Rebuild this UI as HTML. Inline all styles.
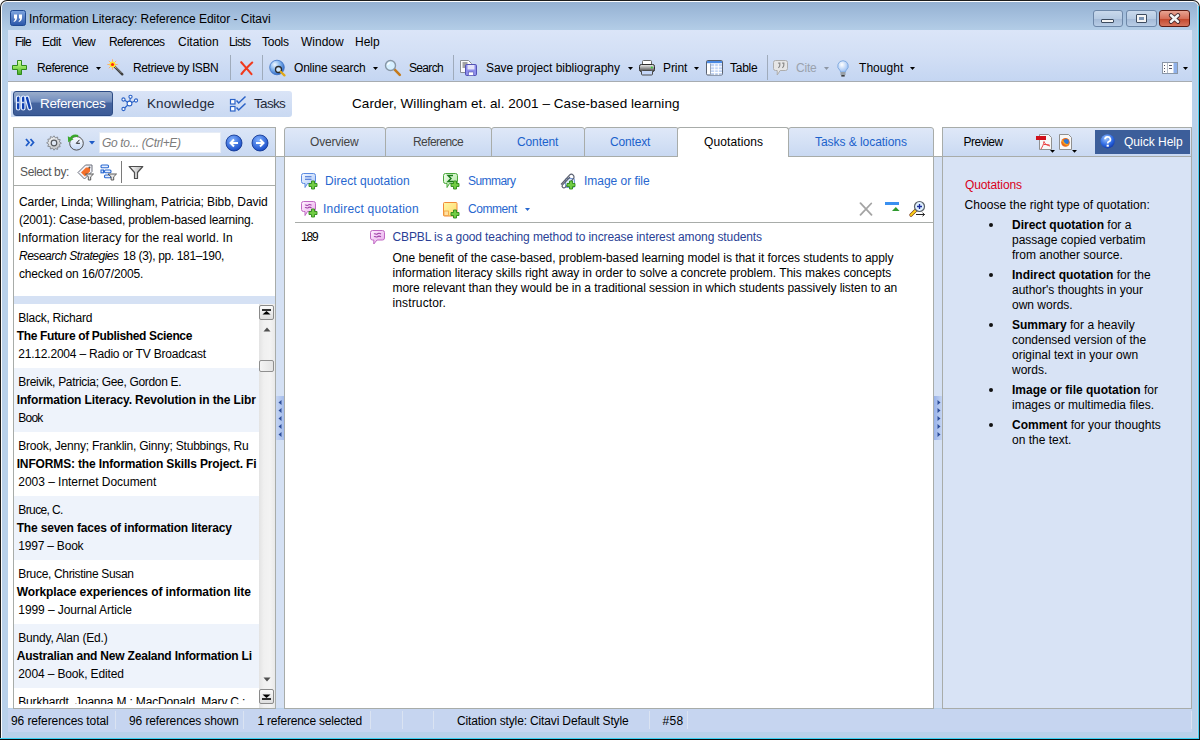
<!DOCTYPE html>
<html><head><meta charset="utf-8"><style>
html,body{margin:0;padding:0;width:1200px;height:740px;overflow:hidden;background:#fff}
body>div,body>svg{position:absolute}
.t{position:absolute;white-space:pre;line-height:1;font-family:"Liberation Sans", sans-serif}
</style></head><body>
<div style="left:0px;top:0px;width:1200px;height:740px;background:#1c1c1c;border-radius:7px 7px 0 0"></div>
<div style="left:1px;top:1px;width:1198px;height:738px;background:#fdfdfd;border-radius:6px 6px 0 0"></div>
<div style="left:2px;top:2px;width:1196px;height:736px;background:linear-gradient(#95b1d2 0px,#a5c0de 15px,#b4cee7 29px,#b9d1ea 60px,#b9d1ea 100%);border-radius:5px 5px 0 0"></div>
<div style="left:1198px;top:6px;width:1px;height:733px;background:#48d0f4"></div>
<div style="left:1197px;top:6px;width:1px;height:732px;background:#c9d6e6"></div>
<div style="left:0px;top:738px;width:1199px;height:1px;background:#38d0f2"></div>
<div style="left:0px;top:739px;width:1200px;height:1px;background:#0a0a0a"></div>
<div style="left:8px;top:30px;width:1184px;height:678px;background:#fff"></div>
<svg style="left:10px;top:10px" width="16" height="16" viewBox="0 0 16 16"><defs><linearGradient id="ig" x1="0" y1="0" x2="0" y2="1"><stop offset="0" stop-color="#7fa6e0"/><stop offset="1" stop-color="#2a55a8"/></linearGradient></defs><rect x="0.5" y="0.5" width="15" height="15" rx="2" fill="url(#ig)" stroke="#1f4a93"/><path d="M4 4.5h3v3c0 2-1 3.5-3 4.5l-.5-.8c1-.6 1.6-1.4 1.7-2.7H4z M9 4.5h3v3c0 2-1 3.5-3 4.5l-.5-.8c1-.6 1.6-1.4 1.7-2.7H9z" fill="#fff"/></svg>
<div class="t" style="left:29.0px;top:12.8px;font-size:12px;color:#000;font-weight:normal;font-style:normal;letter-spacing:-0.024px;">Information Literacy: Reference Editor - Citavi</div>
<div style="left:1093px;top:10px;width:30px;height:17px;box-sizing:border-box;border:1px solid #6d87a8;border-radius:3px;background:linear-gradient(#c9d9ec,#b7cbe3 50%,#a3b9d6 51%,#b8cde6)"></div>
<div style="left:1101px;top:19px;width:13px;height:4px;box-sizing:border-box;background:#f4f4f4;border:1px solid #3c4b5f;border-radius:1px"></div>
<div style="left:1126px;top:10px;width:31px;height:17px;box-sizing:border-box;border:1px solid #6d87a8;border-radius:3px;background:linear-gradient(#c9d9ec,#b7cbe3 50%,#a3b9d6 51%,#b8cde6)"></div>
<div style="left:1136px;top:14px;width:11px;height:9px;box-sizing:border-box;background:#f4f4f4;border:1px solid #3c4b5f;border-radius:1px"></div>
<div style="left:1139px;top:17px;width:5px;height:3px;box-sizing:border-box;background:#7b95b5"></div>
<div style="left:1159px;top:10px;width:31px;height:17px;box-sizing:border-box;border:1px solid #5b1a12;border-radius:3px;background:linear-gradient(#e8a493,#d7705a 50%,#c2452a 51%,#d6745c)"></div>
<svg style="left:1167px;top:12px" width="15" height="13" viewBox="0 0 15 13"><path d="M4 3.3L11 9.7M11 3.3L4 9.7" stroke="#40262a" stroke-width="4.4" stroke-linecap="round"/><path d="M4 3.3L11 9.7M11 3.3L4 9.7" stroke="#f4f4f4" stroke-width="2.6" stroke-linecap="round"/></svg>
<div style="left:8px;top:30px;width:1184px;height:51px;background:linear-gradient(#dbe5f8,#d2dff5 25px,#c5d6f2 50px)"></div>
<div style="left:8px;top:81px;width:1184px;height:1px;background:#a7acb1"></div>
<div class="t" style="left:15.0px;top:35.8px;font-size:12px;color:#000;font-weight:normal;font-style:normal;letter-spacing:-0.887px;">File</div>
<div class="t" style="left:42.0px;top:35.8px;font-size:12px;color:#000;font-weight:normal;font-style:normal;letter-spacing:-0.448px;">Edit</div>
<div class="t" style="left:72.0px;top:35.8px;font-size:12px;color:#000;font-weight:normal;font-style:normal;letter-spacing:-0.709px;">View</div>
<div class="t" style="left:109.0px;top:35.8px;font-size:12px;color:#000;font-weight:normal;font-style:normal;letter-spacing:-0.596px;">References</div>
<div class="t" style="left:178.0px;top:35.8px;font-size:12px;color:#000;font-weight:normal;font-style:normal;letter-spacing:-0.002px;">Citation</div>
<div class="t" style="left:229.0px;top:35.8px;font-size:12px;color:#000;font-weight:normal;font-style:normal;letter-spacing:-0.668px;">Lists</div>
<div class="t" style="left:262.0px;top:35.8px;font-size:12px;color:#000;font-weight:normal;font-style:normal;letter-spacing:-0.253px;">Tools</div>
<div class="t" style="left:301.0px;top:35.8px;font-size:12px;color:#000;font-weight:normal;font-style:normal;letter-spacing:-0.003px;">Window</div>
<div class="t" style="left:355.0px;top:35.8px;font-size:12px;color:#000;font-weight:normal;font-style:normal;letter-spacing:-0.002px;">Help</div>
<div class="t" style="left:37.0px;top:61.8px;font-size:12px;color:#000;font-weight:normal;font-style:normal;letter-spacing:-0.461px;">Reference</div>
<div class="t" style="left:133.0px;top:61.8px;font-size:12px;color:#000;font-weight:normal;font-style:normal;letter-spacing:-0.424px;">Retrieve by ISBN</div>
<div class="t" style="left:294.0px;top:61.8px;font-size:12px;color:#000;font-weight:normal;font-style:normal;letter-spacing:-0.197px;">Online search</div>
<div class="t" style="left:409.0px;top:61.8px;font-size:12px;color:#000;font-weight:normal;font-style:normal;letter-spacing:-0.670px;">Search</div>
<div class="t" style="left:486.0px;top:61.8px;font-size:12px;color:#000;font-weight:normal;font-style:normal;letter-spacing:-0.031px;">Save project bibliography</div>
<div class="t" style="left:663.0px;top:61.8px;font-size:12px;color:#000;font-weight:normal;font-style:normal;letter-spacing:-0.085px;">Print</div>
<div class="t" style="left:730.0px;top:61.8px;font-size:12px;color:#000;font-weight:normal;font-style:normal;letter-spacing:-0.253px;">Table</div>
<div class="t" style="left:796.0px;top:61.8px;font-size:12px;color:#9aa2ad;font-weight:normal;font-style:normal;letter-spacing:-0.222px;">Cite</div>
<div class="t" style="left:859.0px;top:61.8px;font-size:12px;color:#000;font-weight:normal;font-style:normal;letter-spacing:0.050px;">Thought</div>
<svg style="left:96px;top:67px" width="5" height="3" viewBox="0 0 5 3"><path d="M0 0h5L2.5 3z" fill="#000"/></svg>
<svg style="left:373px;top:67px" width="5" height="3" viewBox="0 0 5 3"><path d="M0 0h5L2.5 3z" fill="#000"/></svg>
<svg style="left:628px;top:67px" width="5" height="3" viewBox="0 0 5 3"><path d="M0 0h5L2.5 3z" fill="#000"/></svg>
<svg style="left:694px;top:67px" width="5" height="3" viewBox="0 0 5 3"><path d="M0 0h5L2.5 3z" fill="#000"/></svg>
<svg style="left:910px;top:67px" width="5" height="3" viewBox="0 0 5 3"><path d="M0 0h5L2.5 3z" fill="#000"/></svg>
<svg style="left:1183px;top:67px" width="5" height="3" viewBox="0 0 5 3"><path d="M0 0h5L2.5 3z" fill="#000"/></svg>
<svg style="left:824px;top:67px" width="5" height="3" viewBox="0 0 5 3"><path d="M0 0h5L2.5 3z" fill="#8d96a3"/></svg>
<div style="left:230px;top:55px;width:1px;height:25px;background:#9fabbb"></div>
<div style="left:262px;top:55px;width:1px;height:25px;background:#9fabbb"></div>
<div style="left:453px;top:55px;width:1px;height:25px;background:#9fabbb"></div>
<div style="left:767px;top:55px;width:1px;height:25px;background:#9fabbb"></div>
<svg style="left:12px;top:60px" width="16" height="16" viewBox="0 0 16 16"><defs><linearGradient id="gp" x1="0" y1="0" x2="0" y2="1"><stop offset="0" stop-color="#d9ffa8"/><stop offset="0.5" stop-color="#8ee05a"/><stop offset="1" stop-color="#45a828"/></linearGradient></defs><path d="M5.5 0.5h4v5h5v4h-5v5h-4v-5h-5v-4h5z" fill="url(#gp)" stroke="#2f8a1c" stroke-linejoin="round"/></svg>
<svg style="left:107px;top:59px" width="17" height="17" viewBox="0 0 17 17"><path d="M6.5 6.5L15.3 15.3" stroke="#3c3c3c" stroke-width="2.4" stroke-linecap="round"/><path d="M7.5 7L14.5 14" stroke="#b0b0b0" stroke-width="0.7"/><path d="M5.5 0.3v10.4M0.3 5.5h10.4M1.8 1.8l7.4 7.4M9.2 1.8l-7.4 7.4" stroke="#ffa868" stroke-width="0.9"/><circle cx="5.5" cy="5.5" r="3" fill="#ffe82a"/><circle cx="5.5" cy="5.5" r="1.6" fill="#ff2a10"/></svg>
<svg style="left:239px;top:60px" width="16" height="16" viewBox="0 0 16 16"><path d="M2.2 2.2C5.5 6 9.5 10.5 12.5 14.2M13.2 2.5C10 5.5 5.5 10 2.5 14" stroke="#f03a1e" stroke-width="2.1" stroke-linecap="round" fill="none"/></svg>
<svg style="left:269px;top:59px" width="17" height="18" viewBox="0 0 17 18"><defs><radialGradient id="gg" cx="0.35" cy="0.3" r="0.75"><stop offset="0" stop-color="#f0f8ff"/><stop offset="0.45" stop-color="#86b8f0"/><stop offset="1" stop-color="#2a62c0"/></radialGradient></defs><circle cx="8" cy="8.5" r="7.3" fill="url(#gg)" stroke="#3a70c4" stroke-width="0.8"/><circle cx="9.5" cy="10.5" r="3" fill="#cfe8ff" stroke="#2a2a2a" stroke-width="1.3"/><path d="M11.8 12.8l3.6 3.6" stroke="#e0a818" stroke-width="2.3" stroke-linecap="round"/></svg>
<svg style="left:384px;top:59px" width="18" height="18" viewBox="0 0 18 18"><path d="M10.2 10.2L15.8 15.8" stroke="#c47a1c" stroke-width="2.6" stroke-linecap="round"/><circle cx="6.5" cy="6.5" r="5" fill="#d6f0ff" stroke="#8797a6" stroke-width="1.4"/><path d="M3.6 6.2a3 3 0 0 1 2.6-2.6" stroke="#fff" stroke-width="1.3" fill="none"/></svg>
<svg style="left:460px;top:60px" width="17" height="16" viewBox="0 0 17 16"><path d="M0.5 0.5h8l3 3v9h-11z" fill="#fbfbfb" stroke="#8a8f96"/><path d="M2.5 3h5M2.5 5h5M2.5 7h3" stroke="#4a4a4a"/><rect x="5.5" y="4.5" width="11" height="11" rx="1.2" fill="#8e8eea" stroke="#5252b4"/><rect x="7.5" y="5" width="7" height="4.5" fill="#e4e4fa"/><rect x="8.5" y="12" width="5" height="3.5" fill="#fff" stroke="#5252b4" stroke-width="0.6"/></svg>
<svg style="left:639px;top:60px" width="16" height="16" viewBox="0 0 16 16"><defs><linearGradient id="pg" x1="0" y1="0" x2="0" y2="1"><stop offset="0" stop-color="#f0f0f0"/><stop offset="0.6" stop-color="#8a8a8a"/><stop offset="1" stop-color="#444"/></linearGradient></defs><rect x="3.5" y="0.5" width="9" height="4.5" rx="1" fill="#fff" stroke="#666"/><rect x="0.5" y="4.5" width="15" height="7" rx="1.8" fill="url(#pg)" stroke="#2e2e2e"/><circle cx="12.8" cy="7.6" r="1" fill="#36d036"/><rect x="2.5" y="10.5" width="11" height="4.5" rx="1" fill="#c4d6f8" stroke="#4a4a4a"/></svg>
<svg style="left:706px;top:60px" width="17" height="16" viewBox="0 0 17 16"><rect x="0.5" y="0.5" width="16" height="14.5" rx="1.2" fill="#fff" stroke="#58606e"/><rect x="1" y="1" width="15" height="2.2" fill="#4a8ae4"/><rect x="5" y="4" width="11" height="10.5" fill="#c2d5f5"/><path d="M5 6.8h11M5 9.8h11M5 12.5h11M8.7 4v11M12.3 4v11" stroke="#fff" stroke-width="1"/><path d="M4.5 3.5v11" stroke="#9aa4b4"/></svg>
<svg style="left:773px;top:60px" width="16" height="16" viewBox="0 0 16 16"><path d="M2.5 0.5h10a2 2 0 0 1 2 2v6a2 2 0 0 1-2 2H7.2L4.2 15v-4.5H2.5a2 2 0 0 1-2-2v-6a2 2 0 0 1 2-2z" fill="#e6e6e6" stroke="#adadad"/><path d="M5.2 3.2h1.6v2c0 1.2-.6 2.1-1.6 2.6M9.2 3.2h1.6v2c0 1.2-.6 2.1-1.6 2.6" stroke="#8a8a8a" stroke-width="1.2" fill="none"/></svg>
<svg style="left:837px;top:60px" width="12" height="17" viewBox="0 0 12 17"><defs><radialGradient id="blb" cx="0.4" cy="0.35" r="0.7"><stop offset="0" stop-color="#ffffff"/><stop offset="1" stop-color="#92baf2"/></radialGradient></defs><path d="M6 0.7a5.3 5.3 0 0 0-3.3 9.4c.7.6.8 1.3.8 2h5c0-.7.1-1.4.8-2A5.3 5.3 0 0 0 6 0.7z" fill="url(#blb)" stroke="#7aa6de" stroke-width="0.9"/><rect x="3.5" y="12" width="5" height="3" fill="#98a0a8"/><rect x="4.3" y="15" width="3.4" height="1.6" fill="#3e3e3e"/></svg>
<svg style="left:1162px;top:62px" width="16" height="12" viewBox="0 0 16 12"><rect x="0.5" y="0.5" width="15" height="11" fill="#fdfdfd" stroke="#8a96a6"/><rect x="11.5" y="1" width="3.5" height="10" fill="#8fb1ea"/><path d="M5.5 1v10" stroke="#b4bcc8"/><path d="M2.5 3v1M2.5 6v1M2.5 9v1" stroke="#556"/><path d="M7 3.5h3M7 6.5h3" stroke="#556"/></svg>
<div style="left:11px;top:91px;width:281px;height:26px;background:linear-gradient(#dae4f7,#c9d9f2);border-radius:0 3px 3px 0"></div>
<div style="left:13px;top:91px;width:100px;height:25px;box-sizing:border-box;border:1px solid #2d4c85;border-radius:3px;background:linear-gradient(#9aadcb,#7590c0 40%,#45649f 50%,#3c5b97)"></div>
<svg style="left:15px;top:95px" width="18" height="16" viewBox="0 0 18 16"><g stroke="#e4eeff" stroke-width="1.2" fill="#0d3eb2"><rect x="1.4" y="1" width="3.6" height="14" rx="1.8"/><rect x="6.4" y="1" width="3.6" height="14" rx="1.8"/><rect x="11.6" y="1" width="3.6" height="14" rx="1.8" transform="rotate(-15 13.4 8)"/></g><path d="M2 7.5h2.5M7 7.5h2.5" stroke="#c4d2ee" stroke-width="1.6"/></svg>
<div class="t" style="left:40.0px;top:96.6px;font-size:13.5px;color:#fff;font-weight:normal;font-style:normal;letter-spacing:-0.365px;">References</div>
<svg style="left:121px;top:94px" width="18" height="18" viewBox="0 0 18 18"><g stroke="#2a62c7" stroke-width="1.1" fill="#fff"><path d="M8.5 9.5L2.5 15M8.5 9.5L9.5 2.5M8.5 9.5L15 6.5M8.5 9.5L2.5 5.5" fill="none"/><circle cx="2.5" cy="15" r="1.6"/><circle cx="9.5" cy="2.8" r="1.6"/><circle cx="15" cy="6.5" r="1.6"/><circle cx="2.5" cy="5.5" r="1.6"/><circle cx="8.5" cy="9.5" r="2.4"/></g></svg>
<div class="t" style="left:147.0px;top:96.6px;font-size:13.5px;color:#1f2a3a;font-weight:normal;font-style:normal;letter-spacing:0.088px;">Knowledge</div>
<svg style="left:229px;top:95px" width="18" height="17" viewBox="0 0 18 17"><g stroke="#2a62c7" stroke-width="1.2" fill="#fff"><rect x="1.5" y="4.5" width="4.5" height="4.5"/><rect x="1.5" y="11.5" width="4.5" height="4.5"/></g><path d="M7.5 5.5l2.2 2.5L16.5 1.5M7.5 12.5l2.2 2.5L16.5 8.5" stroke="#2a62c7" stroke-width="1.5" fill="none"/></svg>
<div class="t" style="left:254.0px;top:96.6px;font-size:13.5px;color:#1f2a3a;font-weight:normal;font-style:normal;letter-spacing:-0.690px;">Tasks</div>
<div class="t" style="left:352.0px;top:96.6px;font-size:13.5px;color:#000;font-weight:normal;font-style:normal;letter-spacing:0.064px;">Carder, Willingham et. al. 2001 – Case-based learning</div>
<div style="left:13px;top:127px;width:263px;height:582px;box-sizing:border-box;border:1px solid #a8aca9;background:#fff"></div>
<div style="left:14px;top:128px;width:261px;height:28px;background:linear-gradient(#dce6f7,#c9d9f2)"></div>
<div style="left:14px;top:156px;width:261px;height:1px;background:#a8aca9"></div>
<div style="left:14px;top:185px;width:261px;height:1px;background:#a8aca9"></div>
<div style="left:14px;top:296px;width:261px;height:8px;background:#d5e1f4"></div>
<svg style="left:25px;top:138px" width="10" height="9" viewBox="0 0 10 9"><path d="M1 1l3 3.5-3 3.5M5.5 1l3 3.5-3 3.5" stroke="#1f5bc7" stroke-width="1.8" fill="none"/></svg>
<svg style="left:46px;top:135px" width="16" height="16" viewBox="0 0 16 16"><defs><radialGradient id="gear" cx="0.4" cy="0.35" r="0.7"><stop offset="0" stop-color="#fafafa"/><stop offset="1" stop-color="#b8bcc0"/></radialGradient></defs><path d="M8 0.8l1.3 2 2.3-.8.2 2.4 2.4.2-.8 2.3 2 1.3-2 1.3.8 2.3-2.4.2-.2 2.4-2.3-.8L8 15.2l-1.3-2-2.3.8-.2-2.4-2.4-.2.8-2.3-2-1.3 2-1.3-.8-2.3 2.4-.2.2-2.4 2.3.8z" fill="url(#gear)" stroke="#7a7e84" stroke-width="0.8"/><circle cx="8" cy="8" r="2.8" fill="#dfe8f5" stroke="#55595e" stroke-width="1.2"/></svg>
<svg style="left:67px;top:134px" width="18" height="17" viewBox="0 0 18 17"><defs><linearGradient id="clk" x1="0" y1="0" x2="0" y2="1"><stop offset="0" stop-color="#ffffff"/><stop offset="1" stop-color="#c4d8f6"/></linearGradient></defs><circle cx="9.5" cy="9.3" r="6.8" fill="url(#clk)" stroke="#505050" stroke-width="1"/><path d="M12.5 5.8L9.3 9.3h3.6" stroke="#222" stroke-width="1" fill="none"/><path d="M11 2.2C8 1 5 2 3.8 4.5" stroke="#3aa82a" stroke-width="2.4" fill="none"/><path d="M0.8 2.3L1.2 8.2 6.6 5.2z" fill="#3aa82a"/></svg>
<svg style="left:89px;top:141px" width="6" height="4" viewBox="0 0 6 4"><path d="M0 0h6L3 3.5z" fill="#1f5bc7"/></svg>
<div style="left:99px;top:132px;width:122px;height:21px;box-sizing:border-box;border:1px solid #e6ecf5;background:#fff"></div>
<div class="t" style="left:102.0px;top:136.8px;font-size:12px;color:#7c7c7c;font-weight:normal;font-style:italic;letter-spacing:-0.335px;">Go to... (Ctrl+E)</div>
<svg style="left:225px;top:134px" width="18" height="18" viewBox="0 0 18 18"><defs><radialGradient id="bg1" cx="0.4" cy="0.3" r="0.8"><stop offset="0" stop-color="#7fb0ff"/><stop offset="1" stop-color="#0b3fc0"/></radialGradient></defs><circle cx="9" cy="9" r="8" fill="url(#bg1)" stroke="#0a2f8a" stroke-width="0.8"/><path d="M13 9H6M9 5.5L5.5 9 9 12.5" stroke="#fff" stroke-width="2" fill="none"/></svg>
<svg style="left:251px;top:134px" width="18" height="18" viewBox="0 0 18 18"><circle cx="9" cy="9" r="8" fill="url(#bg1)" stroke="#0a2f8a" stroke-width="0.8"/><path d="M5 9h7M9 5.5L12.5 9 9 12.5" stroke="#fff" stroke-width="2" fill="none"/></svg>
<div class="t" style="left:20.0px;top:165.8px;font-size:12px;color:#555;font-weight:normal;font-style:normal;letter-spacing:-0.373px;">Select by:</div>
<svg style="left:77px;top:163px" width="18" height="18" viewBox="0 0 18 18"><path d="M1 9.5L8.5 2h6.5v6.5L7.5 16z" fill="#f4f4fa" stroke="#6a6e7a"/><path d="M4 9.5L9 4.5h4v4L8 13.5z" fill="#f4702a"/><circle cx="12.5" cy="4.5" r="1" fill="#555"/><path d="M8.5 11h8l-2.8 2.8v3.2h-2.4v-3.2z" fill="#e8e8e8" stroke="#4a4a4a" stroke-width="0.9"/></svg>
<svg style="left:100px;top:164px" width="18" height="18" viewBox="0 0 18 18"><g fill="#e8f0ff" stroke="#2b6ad1" stroke-width="1.1"><rect x="1" y="1" width="7.5" height="2.8" rx="1"/><rect x="1" y="6" width="2.5" height="2.8"/><rect x="4.5" y="6" width="6.5" height="2.8" rx="1"/><rect x="4.5" y="11" width="6.5" height="2.8" rx="1"/></g><path d="M8 10h8.5l-2.8 2.8v3.2h-2.6v-3.2z" fill="#e8e8e8" stroke="#4a4a4a" stroke-width="0.9"/></svg>
<div style="left:121px;top:161px;width:1px;height:22px;background:#7a7a7a"></div>
<svg style="left:128px;top:164px" width="16" height="16" viewBox="0 0 16 16"><defs><linearGradient id="fun" x1="0" y1="0" x2="1" y2="0"><stop offset="0" stop-color="#ffffff"/><stop offset="1" stop-color="#b0b0b0"/></linearGradient></defs><path d="M1.2 2.5h13.6L9.5 8.5v6H6.5v-6z" fill="url(#fun)" stroke="#4e4e4e" stroke-width="1.2" stroke-linejoin="round"/></svg>
<div class="t" style="left:19.0px;top:195.8px;font-size:12px;color:#000;font-weight:normal;font-style:normal;letter-spacing:-0.073px;">Carder, Linda; Willingham, Patricia; Bibb, David</div>
<div class="t" style="left:19.0px;top:213.8px;font-size:12px;color:#000;font-weight:normal;font-style:normal;letter-spacing:-0.174px;">(2001): Case-based, problem-based learning.</div>
<div class="t" style="left:18.0px;top:231.8px;font-size:12px;color:#000;font-weight:normal;font-style:normal;letter-spacing:0.093px;">Information literacy for the real world. In</div>
<div class="t" style="left:19.0px;top:249.8px;font-size:12px;color:#000;font-weight:normal;font-style:italic;letter-spacing:-0.484px;">Research Strategies</div>
<div class="t" style="left:123.0px;top:249.8px;font-size:12px;color:#000;font-weight:normal;font-style:normal;letter-spacing:-0.355px;">18 (3), pp. 181–190,</div>
<div class="t" style="left:19.0px;top:267.8px;font-size:12px;color:#000;font-weight:normal;font-style:normal;letter-spacing:-0.180px;">checked on 16/07/2005.</div>
<div style="left:14px;top:304px;width:245px;height:404px;overflow:hidden">
<div style="position:absolute;left:0;top:0px;width:245px;height:64px;background:#fff"></div>
<div style="position:absolute;left:0;top:64px;width:245px;height:64px;background:#eef3fb"></div>
<div style="position:absolute;left:0;top:128px;width:245px;height:64px;background:#fff"></div>
<div style="position:absolute;left:0;top:192px;width:245px;height:64px;background:#eef3fb"></div>
<div style="position:absolute;left:0;top:256px;width:245px;height:64px;background:#fff"></div>
<div style="position:absolute;left:0;top:320px;width:245px;height:64px;background:#eef3fb"></div>
<div style="position:absolute;left:0;top:384px;width:245px;height:64px;background:#fff"></div>
</div>
<div style="left:0;top:0;width:1200px;height:740px;clip-path:inset(304px 941px 36px 14px)">
<div class="t" style="left:18.3px;top:311.8px;font-size:12px;color:#000;font-weight:normal;font-style:normal;letter-spacing:-0.253px;">Black, Richard</div>
<div class="t" style="left:16.7px;top:329.8px;font-size:12px;color:#000;font-weight:bold;font-style:normal;letter-spacing:-0.345px;">The Future of Published Science</div>
<div class="t" style="left:18.3px;top:347.8px;font-size:12px;color:#000;font-weight:normal;font-style:normal;letter-spacing:-0.208px;">21.12.2004 – Radio or TV Broadcast</div>
<div class="t" style="left:18.3px;top:375.8px;font-size:12px;color:#000;font-weight:normal;font-style:normal;letter-spacing:-0.315px;">Breivik, Patricia; Gee, Gordon E.</div>
<div class="t" style="left:16.7px;top:393.8px;font-size:12px;color:#000;font-weight:bold;font-style:normal;letter-spacing:-0.123px;">Information Literacy. Revolution in the Libr</div>
<div class="t" style="left:18.3px;top:411.8px;font-size:12px;color:#000;font-weight:normal;font-style:normal;letter-spacing:-0.784px;">Book</div>
<div class="t" style="left:18.3px;top:439.8px;font-size:12px;color:#000;font-weight:normal;font-style:normal;letter-spacing:-0.213px;">Brook, Jenny; Franklin, Ginny; Stubbings, Ru</div>
<div class="t" style="left:16.7px;top:457.8px;font-size:12px;color:#000;font-weight:bold;font-style:normal;letter-spacing:-0.147px;">INFORMS: the Information Skills Project. Fi</div>
<div class="t" style="left:18.3px;top:475.8px;font-size:12px;color:#000;font-weight:normal;font-style:normal;letter-spacing:-0.036px;">2003 – Internet Document</div>
<div class="t" style="left:18.3px;top:503.8px;font-size:12px;color:#000;font-weight:normal;font-style:normal;letter-spacing:-0.610px;">Bruce, C.</div>
<div class="t" style="left:16.7px;top:521.8px;font-size:12px;color:#000;font-weight:bold;font-style:normal;letter-spacing:-0.179px;">The seven faces of information literacy</div>
<div class="t" style="left:18.3px;top:539.8px;font-size:12px;color:#000;font-weight:normal;font-style:normal;letter-spacing:-0.209px;">1997 – Book</div>
<div class="t" style="left:18.3px;top:567.8px;font-size:12px;color:#000;font-weight:normal;font-style:normal;letter-spacing:-0.336px;">Bruce, Christine Susan</div>
<div class="t" style="left:16.7px;top:585.8px;font-size:12px;color:#000;font-weight:bold;font-style:normal;letter-spacing:-0.092px;">Workplace experiences of information lite</div>
<div class="t" style="left:18.3px;top:603.8px;font-size:12px;color:#000;font-weight:normal;font-style:normal;letter-spacing:-0.085px;">1999 – Journal Article</div>
<div class="t" style="left:18.3px;top:631.8px;font-size:12px;color:#000;font-weight:normal;font-style:normal;letter-spacing:-0.198px;">Bundy, Alan (Ed.)</div>
<div class="t" style="left:16.7px;top:649.8px;font-size:12px;color:#000;font-weight:bold;font-style:normal;letter-spacing:-0.201px;">Australian and New Zealand Information Li</div>
<div class="t" style="left:18.3px;top:667.8px;font-size:12px;color:#000;font-weight:normal;font-style:normal;letter-spacing:-0.134px;">2004 – Book, Edited</div>
<div class="t" style="left:18.3px;top:695.8px;font-size:12px;color:#000;font-weight:normal;font-style:normal;letter-spacing:-0.176px;">Burkhardt, Joanna M.; MacDonald, Mary C.;</div>
</div>
<div style="left:259px;top:304px;width:16px;height:404px;background:linear-gradient(90deg,#e3e3e3,#f0f0f0 30%,#f3f3f3 70%,#e9e9e9)"></div>
<div style="left:259px;top:305px;width:15px;height:15px;box-sizing:border-box;border:1px solid #8a8a8a;border-radius:2px;background:linear-gradient(#fafafa,#dedede)"></div>
<svg style="left:261px;top:309px" width="11" height="7" viewBox="0 0 11 7"><path d="M1 1h9" stroke="#000" stroke-width="1.6"/><path d="M5.5 2L9.5 5.5H1.5z" fill="#000"/></svg>
<svg style="left:263px;top:327px" width="8" height="5" viewBox="0 0 8 5"><path d="M4 0.5L7.5 4.5h-7z" fill="#505050"/></svg>
<div style="left:259px;top:360px;width:15px;height:12px;box-sizing:border-box;border:1px solid #8f8f8f;border-radius:2px;background:linear-gradient(90deg,#f4f4f4,#e4e4e4)"></div>
<svg style="left:263px;top:677px" width="8" height="5" viewBox="0 0 8 5"><path d="M4 4.5L7.5 0.5h-7z" fill="#505050"/></svg>
<div style="left:259px;top:689px;width:15px;height:15px;box-sizing:border-box;border:1px solid #8a8a8a;border-radius:2px;background:linear-gradient(#fafafa,#dedede)"></div>
<svg style="left:261px;top:693px" width="11" height="7" viewBox="0 0 11 7"><path d="M1 6h9" stroke="#000" stroke-width="1.6"/><path d="M5.5 5L9.5 1.5H1.5z" fill="#000"/></svg>
<div style="left:14px;top:708px;width:261px;height:1px;background:#a8aca9"></div>
<div style="left:276px;top:157px;width:8px;height:551px;background:#d5e1f4"></div>
<div style="left:275px;top:156px;width:10px;height:1px;background:#a8aca9"></div>
<div style="left:276px;top:396px;width:8px;height:44px;background:linear-gradient(90deg,#c4d4f2,#a4bcec)"></div>
<svg style="left:278px;top:398px" width="4" height="40" viewBox="0 0 4 40"><path d="M3.5 2v5L0.5 4.5z" fill="#2e4f9a"/><path d="M3.5 10v5L0.5 12.5z" fill="#2e4f9a"/><path d="M3.5 18v5L0.5 20.5z" fill="#2e4f9a"/><path d="M3.5 26v5L0.5 28.5z" fill="#2e4f9a"/><path d="M3.5 34v5L0.5 36.5z" fill="#2e4f9a"/></svg>
<div style="left:934px;top:157px;width:8px;height:551px;background:#d5e1f4"></div>
<div style="left:933px;top:156px;width:10px;height:1px;background:#a8aca9"></div>
<div style="left:934px;top:396px;width:8px;height:44px;background:linear-gradient(90deg,#98b2ea,#c4d4f2)"></div>
<svg style="left:937px;top:398px" width="4" height="40" viewBox="0 0 4 40"><path d="M0.5 2v5L3.5 4.5z" fill="#2e4f9a"/><path d="M0.5 10v5L3.5 12.5z" fill="#2e4f9a"/><path d="M0.5 18v5L3.5 20.5z" fill="#2e4f9a"/><path d="M0.5 26v5L3.5 28.5z" fill="#2e4f9a"/><path d="M0.5 34v5L3.5 36.5z" fill="#2e4f9a"/></svg>
<div style="left:284px;top:156px;width:650px;height:553px;box-sizing:border-box;border:1px solid #a8aca9;border-top:none;background:#fff"></div>
<div style="left:284px;top:156px;width:394px;height:1px;background:#a8aca9"></div>
<div style="left:788px;top:156px;width:146px;height:1px;background:#a8aca9"></div>
<div style="left:284px;top:127px;width:102px;height:30px;box-sizing:border-box;border:1px solid #a8aca9;border-radius:3px 3px 0 0;background:linear-gradient(#dfe8f8,#c9d9f2)"></div>
<div class="t" style="left:310.0px;top:135.8px;font-size:12px;color:#444;font-weight:normal;font-style:normal;letter-spacing:-0.192px;">Overview</div>
<div style="left:385px;top:127px;width:107px;height:30px;box-sizing:border-box;border:1px solid #a8aca9;border-radius:3px 3px 0 0;background:linear-gradient(#dfe8f8,#c9d9f2)"></div>
<div class="t" style="left:413.0px;top:135.8px;font-size:12px;color:#444;font-weight:normal;font-style:normal;letter-spacing:-0.586px;">Reference</div>
<div style="left:491px;top:127px;width:94px;height:30px;box-sizing:border-box;border:1px solid #a8aca9;border-radius:3px 3px 0 0;background:linear-gradient(#dfe8f8,#c9d9f2)"></div>
<div class="t" style="left:517.0px;top:135.8px;font-size:12px;color:#1b62cc;font-weight:normal;font-style:normal;letter-spacing:-0.116px;">Content</div>
<div style="left:584px;top:127px;width:95px;height:30px;box-sizing:border-box;border:1px solid #a8aca9;border-radius:3px 3px 0 0;background:linear-gradient(#dfe8f8,#c9d9f2)"></div>
<div class="t" style="left:610.0px;top:135.8px;font-size:12px;color:#1b62cc;font-weight:normal;font-style:normal;letter-spacing:-0.170px;">Context</div>
<div style="left:788px;top:127px;width:146px;height:30px;box-sizing:border-box;border:1px solid #a8aca9;border-radius:3px 3px 0 0;background:linear-gradient(#dfe8f8,#c9d9f2)"></div>
<div class="t" style="left:815.0px;top:135.8px;font-size:12px;color:#1b62cc;font-weight:normal;font-style:normal;letter-spacing:-0.044px;">Tasks &amp; locations</div>
<div style="left:677px;top:127px;width:112px;height:30px;box-sizing:border-box;border:1px solid #a8aca9;border-bottom:none;border-radius:3px 3px 0 0;background:#fff"></div>
<div class="t" style="left:704.0px;top:135.8px;font-size:12px;color:#000;font-weight:normal;font-style:normal;letter-spacing:0.107px;">Quotations</div>
<svg style="left:301px;top:173px" width="17" height="17" viewBox="0 0 17 17"><defs><linearGradient id="bub1" x1="0" y1="0" x2="1" y2="1"><stop offset="0" stop-color="#f4f8ff"/><stop offset="1" stop-color="#a8c6f8"/></linearGradient></defs><path d="M2.5 0.5h10a2 2 0 0 1 2 2v6a2 2 0 0 1-2 2H6.5L4 14.5v-4H2.5a2 2 0 0 1-2-2v-6a2 2 0 0 1 2-2z" fill="url(#bub1)" stroke="#5a8ae0"/><path d="M4 3.8h6.5M4 6.3h6.5" stroke="#3a6ad0" stroke-width="1.1"/><path d="M10.5 8h3v2.5H16v3h-2.5V16h-3v-2.5H8v-3h2.5z" fill="#72cc44" stroke="#2d8a1a" stroke-width="0.9" stroke-linejoin="round"/></svg>
<div class="t" style="left:325.0px;top:174.8px;font-size:12px;color:#2767cf;font-weight:normal;font-style:normal;letter-spacing:0.042px;">Direct quotation</div>
<svg style="left:443px;top:173px" width="17" height="17" viewBox="0 0 17 17"><defs><linearGradient id="bub2" x1="0" y1="0" x2="1" y2="1"><stop offset="0" stop-color="#f4fff0"/><stop offset="1" stop-color="#a8e498"/></linearGradient></defs><path d="M2.5 0.5h10a2 2 0 0 1 2 2v6a2 2 0 0 1-2 2H6.5L4 14.5v-4H2.5a2 2 0 0 1-2-2v-6a2 2 0 0 1 2-2z" fill="url(#bub2)" stroke="#4aa83a"/><path d="M10 2.5H5l3 3-3 3h5" stroke="#1a7a1a" stroke-width="1.4" fill="none"/><path d="M10.5 8h3v2.5H16v3h-2.5V16h-3v-2.5H8v-3h2.5z" fill="#72cc44" stroke="#2d8a1a" stroke-width="0.9" stroke-linejoin="round"/></svg>
<div class="t" style="left:468.0px;top:174.8px;font-size:12px;color:#2767cf;font-weight:normal;font-style:normal;letter-spacing:-0.557px;">Summary</div>
<svg style="left:559px;top:172px" width="18" height="18" viewBox="0 0 18 18"><rect x="6.5" y="6.5" width="9" height="9" rx="1" fill="#dce8fb" stroke="#7a9ad8"/><path d="M2 12.5L10.5 3.2a2.6 2.6 0 0 1 3.8 3.6L6.2 15.3a1.8 1.8 0 0 1-2.6-2.5L11 5" fill="none" stroke="#5a6070" stroke-width="1.2"/><path d="M10.5 9h3v2.5H16v3h-2.5V17h-3v-2.5H8v-3h2.5z" fill="#72cc44" stroke="#2d8a1a" stroke-width="0.9" stroke-linejoin="round"/></svg>
<div class="t" style="left:584.0px;top:174.8px;font-size:12px;color:#2767cf;font-weight:normal;font-style:normal;letter-spacing:-0.030px;">Image or file</div>
<svg style="left:301px;top:201px" width="17" height="17" viewBox="0 0 17 17"><defs><linearGradient id="bub3" x1="0" y1="0" x2="1" y2="1"><stop offset="0" stop-color="#fff4ff"/><stop offset="1" stop-color="#eaa8ea"/></linearGradient></defs><path d="M2.5 0.5h10a2 2 0 0 1 2 2v6a2 2 0 0 1-2 2H6.5L4 14.5v-4H2.5a2 2 0 0 1-2-2v-6a2 2 0 0 1 2-2z" fill="url(#bub3)" stroke="#c068c4"/><path d="M4 4.2c1-1 2 1 3 0s2-1 3.5 0M4 6.8c1-1 2 1 3 0s2-1 3.5 0" stroke="#a040a8" stroke-width="1.1" fill="none"/><path d="M10.5 8h3v2.5H16v3h-2.5V16h-3v-2.5H8v-3h2.5z" fill="#72cc44" stroke="#2d8a1a" stroke-width="0.9" stroke-linejoin="round"/></svg>
<div class="t" style="left:323.0px;top:202.8px;font-size:12px;color:#2767cf;font-weight:normal;font-style:normal;letter-spacing:0.212px;">Indirect quotation</div>
<svg style="left:443px;top:202px" width="17" height="17" viewBox="0 0 17 17"><defs><linearGradient id="cmt" x1="0" y1="0" x2="1" y2="1"><stop offset="0" stop-color="#fff8a8"/><stop offset="1" stop-color="#ffd86a"/></linearGradient></defs><rect x="0.5" y="0.5" width="13.5" height="13.5" rx="1" fill="url(#cmt)" stroke="#f08a38"/><rect x="1" y="9" width="4.5" height="4.5" fill="#ffe0a0" stroke="#f0a040" stroke-width="0.8"/><path d="M10.5 8h3v2.5H16v3h-2.5V16h-3v-2.5H8v-3h2.5z" fill="#72cc44" stroke="#2d8a1a" stroke-width="0.9" stroke-linejoin="round"/></svg>
<div class="t" style="left:468.0px;top:202.8px;font-size:12px;color:#2767cf;font-weight:normal;font-style:normal;letter-spacing:-0.447px;">Comment</div>
<svg style="left:525px;top:208px" width="5" height="3" viewBox="0 0 5 3"><path d="M0 0h5L2.5 3z" fill="#2767cf"/></svg>
<svg style="left:859px;top:202px" width="14" height="14" viewBox="0 0 14 14"><path d="M1.5 1.2L12.5 12.8M12.2 1.5L1.5 12.8" stroke="#a4a4a4" stroke-width="1.8" stroke-linecap="round"/></svg>
<svg style="left:885px;top:201px" width="15" height="12" viewBox="0 0 15 12"><rect x="0" y="1" width="14" height="3" fill="#3a90f0"/><path d="M10.8 6L14.6 10H7z" fill="#2e9a2e"/></svg>
<svg style="left:909px;top:200px" width="18" height="18" viewBox="0 0 18 18"><path d="M6.5 10.5L2 15" stroke="#7a3a10" stroke-width="3.2" stroke-linecap="round"/><path d="M6.5 10.5L2 15" stroke="#ffd21a" stroke-width="2" stroke-linecap="round"/><circle cx="10.5" cy="6.5" r="5" fill="#dff0ff" stroke="#5a6068" stroke-width="1.2"/><path d="M10.5 4v5M8 6.5h5" stroke="#1a2a9a" stroke-width="1.3"/><path d="M7 14.5h8.5M13.5 12.8l2 1.7-2 1.7" stroke="#222" stroke-width="1" fill="none"/></svg>
<div style="left:295px;top:222px;width:638px;height:1px;background:#a8aca9"></div>
<div class="t" style="left:301.0px;top:230.8px;font-size:12px;color:#000;font-weight:normal;font-style:normal;letter-spacing:-1.174px;">189</div>
<svg style="left:370px;top:230px" width="16" height="16" viewBox="0 0 16 16"><defs><linearGradient id="cbb" x1="0" y1="0" x2="1" y2="1"><stop offset="0" stop-color="#fff0ff"/><stop offset="1" stop-color="#e6a4ea"/></linearGradient></defs><path d="M2.5 0.5h10a2 2 0 0 1 2 2v5.5a2 2 0 0 1-2 2H7L3.8 14v-4H2.5a2 2 0 0 1-2-2V2.5a2 2 0 0 1 2-2z" fill="url(#cbb)" stroke="#c068c4"/><path d="M4 4c1.1-1 2.2 1 3.3 0s2.2-1 3.7 0M4 6.8c1.1-1 2.2 1 3.3 0s2.2-1 3.7 0" stroke="#a040a8" stroke-width="1.1" fill="none"/></svg>
<div class="t" style="left:392.5px;top:230.8px;font-size:12px;color:#2a3f96;font-weight:normal;font-style:normal;letter-spacing:-0.104px;">CBPBL is a good teaching method to increase interest among students</div>
<div class="t" style="left:392.5px;top:251.8px;font-size:12px;color:#000;font-weight:normal;font-style:normal;letter-spacing:-0.035px;">One benefit of the case-based, problem-based learning model is that it forces students to apply</div>
<div class="t" style="left:392.5px;top:266.8px;font-size:12px;color:#000;font-weight:normal;font-style:normal;letter-spacing:-0.034px;">information literacy skills right away in order to solve a concrete problem. This makes concepts</div>
<div class="t" style="left:392.5px;top:281.8px;font-size:12px;color:#000;font-weight:normal;font-style:normal;letter-spacing:-0.044px;">more relevant than they would be in a traditional session in which students passively listen to an</div>
<div class="t" style="left:392.5px;top:296.8px;font-size:12px;color:#000;font-weight:normal;font-style:normal;letter-spacing:0.131px;">instructor.</div>
<div style="left:942px;top:127px;width:250px;height:582px;box-sizing:border-box;border:1px solid #a8aca9;background:#d8e3f5"></div>
<div style="left:943px;top:128px;width:248px;height:28px;background:linear-gradient(#dfe8f8,#c9d9f2)"></div>
<div style="left:943px;top:156px;width:248px;height:1px;background:#a8aca9"></div>
<div class="t" style="left:963.5px;top:135.8px;font-size:12px;color:#000;font-weight:normal;font-style:normal;letter-spacing:-0.502px;">Preview</div>
<svg style="left:1036px;top:134px" width="20" height="19" viewBox="0 0 20 19"><path d="M3.5 0.5h9l3 3v12h-12z" fill="#f8f8f8" stroke="#909090"/><rect x="0" y="2" width="10" height="4" fill="#d0101a"/><path d="M5 15c1.5-2.5 2.8-5 3-7.5M8 7.5c.5 2 2 3.5 6 4.5M8 10.5c1.5 0 3 0 5.5.5" stroke="#e82828" stroke-width="0.9" fill="none"/><path d="M14 16h5l-2.5 2.7z" fill="#000"/></svg>
<svg style="left:1059px;top:134px" width="19" height="19" viewBox="0 0 19 19"><path d="M0.5 0.5h9l3 3v12h-12z" fill="#f8f8f8" stroke="#909090"/><circle cx="6.5" cy="8.4" r="4.3" fill="#e86a1a"/><circle cx="7.2" cy="7.6" r="2.6" fill="#2a78d8"/><path d="M3 6.5c1 .5 1.5 2 2.5 3s2.5 1.5 4 1" stroke="#f4a020" stroke-width="1.4" fill="none"/><path d="M13 16h5l-2.5 2.7z" fill="#000"/></svg>
<div style="left:1095px;top:130px;width:95px;height:24px;background:#3c5e9a"></div>
<svg style="left:1100px;top:134px" width="16" height="16" viewBox="0 0 16 16"><defs><radialGradient id="qg" cx="0.4" cy="0.3" r="0.8"><stop offset="0" stop-color="#9cc4ff"/><stop offset="0.6" stop-color="#2a66e0"/><stop offset="1" stop-color="#0a2c9a"/></radialGradient></defs><circle cx="7.6" cy="7.3" r="7.1" fill="url(#qg)"/><path d="M5 5.3a2.7 2.5 0 1 1 3.8 2.3c-.8.4-1.1.9-1.1 1.8" stroke="#fff" stroke-width="1.7" fill="none"/><rect x="6.6" y="10.7" width="2.2" height="2" fill="#fff"/></svg>
<div class="t" style="left:1124.0px;top:135.8px;font-size:12px;color:#fff;font-weight:normal;font-style:normal;letter-spacing:-0.002px;">Quick Help</div>
<div class="t" style="left:965.0px;top:178.8px;font-size:12px;color:#d9001b;font-weight:normal;font-style:normal;letter-spacing:-0.115px;">Quotations</div>
<div class="t" style="left:964.5px;top:198.8px;font-size:12px;color:#000;font-weight:normal;font-style:normal;letter-spacing:0.055px;">Choose the right type of quotation:</div>
<div style="left:988.5px;top:222.5px;width:4.5px;height:4.5px;border-radius:2.25px;background:#111"></div>
<div class="t" style="left:1012px;top:218.8px;font-size:12px;color:#000"><span style="font-weight:bold">Direct quotation</span><span style="font-weight:normal"> for a</span></div>
<div class="t" style="left:1012px;top:233.8px;font-size:12px;color:#000"><span style="font-weight:normal">passage copied verbatim</span></div>
<div class="t" style="left:1012px;top:248.8px;font-size:12px;color:#000"><span style="font-weight:normal">from another source.</span></div>
<div style="left:988.5px;top:272.5px;width:4.5px;height:4.5px;border-radius:2.25px;background:#111"></div>
<div class="t" style="left:1012px;top:268.8px;font-size:12px;color:#000"><span style="font-weight:bold">Indirect quotation</span><span style="font-weight:normal"> for the</span></div>
<div class="t" style="left:1012px;top:283.8px;font-size:12px;color:#000"><span style="font-weight:normal">author&#x27;s thoughts in your</span></div>
<div class="t" style="left:1012px;top:298.8px;font-size:12px;color:#000"><span style="font-weight:normal">own words.</span></div>
<div style="left:988.5px;top:322.5px;width:4.5px;height:4.5px;border-radius:2.25px;background:#111"></div>
<div class="t" style="left:1012px;top:318.8px;font-size:12px;color:#000"><span style="font-weight:bold">Summary</span><span style="font-weight:normal"> for a heavily</span></div>
<div class="t" style="left:1012px;top:333.8px;font-size:12px;color:#000"><span style="font-weight:normal">condensed version of the</span></div>
<div class="t" style="left:1012px;top:348.8px;font-size:12px;color:#000"><span style="font-weight:normal">original text in your own</span></div>
<div class="t" style="left:1012px;top:363.8px;font-size:12px;color:#000"><span style="font-weight:normal">words.</span></div>
<div style="left:988.5px;top:387.5px;width:4.5px;height:4.5px;border-radius:2.25px;background:#111"></div>
<div class="t" style="left:1012px;top:383.8px;font-size:12px;color:#000"><span style="font-weight:bold">Image or file quotation</span><span style="font-weight:normal"> for</span></div>
<div class="t" style="left:1012px;top:398.8px;font-size:12px;color:#000"><span style="font-weight:normal">images or multimedia files.</span></div>
<div style="left:988.5px;top:422.5px;width:4.5px;height:4.5px;border-radius:2.25px;background:#111"></div>
<div class="t" style="left:1012px;top:418.8px;font-size:12px;color:#000"><span style="font-weight:bold">Comment</span><span style="font-weight:normal"> for your thoughts</span></div>
<div class="t" style="left:1012px;top:433.8px;font-size:12px;color:#000"><span style="font-weight:normal">on the text.</span></div>
<div style="left:8px;top:709px;width:1184px;height:23px;background:#c6d5f0"></div>
<div style="left:8px;top:732px;width:1184px;height:6px;background:#b9d1ea"></div>
<div class="t" style="left:11.0px;top:714.8px;font-size:12px;color:#000;font-weight:normal;font-style:normal;letter-spacing:-0.096px;">96 references total</div>
<div class="t" style="left:129.0px;top:714.8px;font-size:12px;color:#000;font-weight:normal;font-style:normal;letter-spacing:-0.096px;">96 references shown</div>
<div class="t" style="left:257.5px;top:714.8px;font-size:12px;color:#000;font-weight:normal;font-style:normal;letter-spacing:-0.214px;">1 reference selected</div>
<div class="t" style="left:457.0px;top:714.8px;font-size:12px;color:#000;font-weight:normal;font-style:normal;letter-spacing:-0.145px;">Citation style: Citavi Default Style</div>
<div class="t" style="left:662.5px;top:714.8px;font-size:12px;color:#000;font-weight:normal;font-style:normal;letter-spacing:0.326px;">#58</div>
<div style="left:115px;top:711px;width:1px;height:18px;background:#dae3f2"></div>
<div style="left:243px;top:711px;width:1px;height:18px;background:#dae3f2"></div>
<div style="left:370px;top:711px;width:1px;height:18px;background:#dae3f2"></div>
<div style="left:402px;top:711px;width:1px;height:18px;background:#dae3f2"></div>
<div style="left:433px;top:711px;width:1px;height:18px;background:#dae3f2"></div>
<div style="left:649px;top:711px;width:1px;height:18px;background:#dae3f2"></div>
<div style="left:687px;top:711px;width:1px;height:18px;background:#dae3f2"></div>
<div style="left:1191px;top:711px;width:1px;height:18px;background:#dae3f2"></div>
</body></html>
